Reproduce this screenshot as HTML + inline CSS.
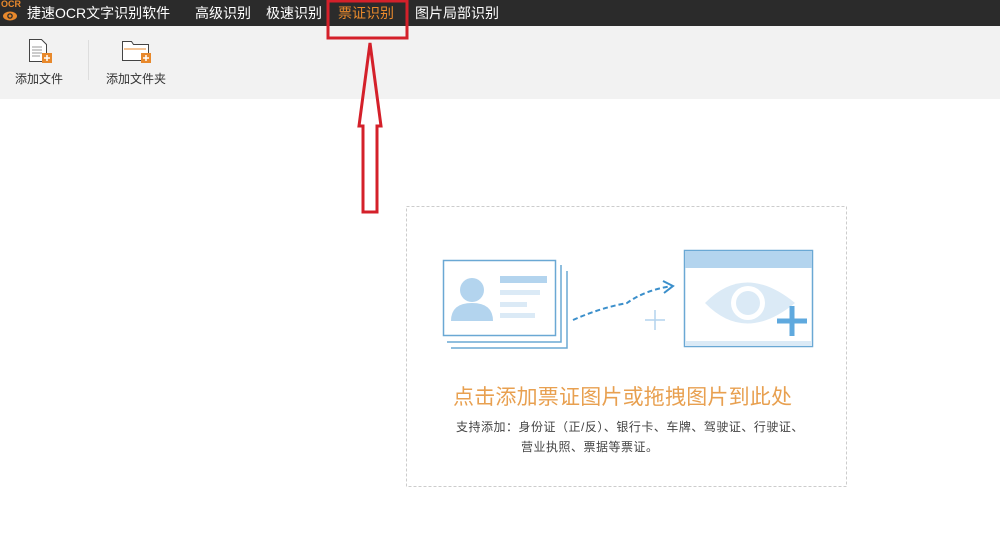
<!DOCTYPE html>
<html><head><meta charset="utf-8"><style>
body{margin:0;width:1000px;height:550px;background:#fff;position:relative;overflow:hidden;font-family:"Liberation Sans","Noto Sans CJK SC",sans-serif}
.top{position:absolute;left:0;top:0;width:1000px;height:26px;background:#2b2b2b;color:#fff;font-size:14px}
.top span{position:absolute;top:3px}
.tb{position:absolute;left:0;top:26px;width:1000px;height:73px;background:#f2f2f2}
.lbl{position:absolute;font-size:12px;color:#333}
</style></head><body>
<div class="top">
<div style="position:absolute;left:1px;top:0;font-size:9px;color:#e8892c;font-weight:bold;line-height:9px">OCR</div>
<svg style="position:absolute;left:2px;top:10px" width="16" height="12"><ellipse cx="8" cy="6" rx="7" ry="4.5" fill="#e8892c"/><circle cx="8" cy="6" r="2.8" fill="#2b2b2b"/><circle cx="8" cy="6" r="1.5" fill="#e8892c"/></svg>
<span style="left:27px">捷速OCR文字识别软件</span>
<span style="left:195px">高级识别</span>
<span style="left:266px">极速识别</span>
<span style="left:338px;color:#e8892c">票证识别</span>
<span style="left:415px">图片局部识别</span>
</div>
<div class="tb"></div>
<svg style="position:absolute;left:28px;top:38px" width="26" height="26"><path d="M1.5 1.5h12l5 5v17h-17z" fill="#fff" stroke="#444"/><path d="M4 9h10M4 12h10M4 15h10M4 18h8" stroke="#999"/><rect x="14" y="15" width="10" height="10" fill="#e8892c"/><path d="M19 17v6M16 20h6" stroke="#fff" stroke-width="1.5"/></svg>
<div class="lbl" style="left:15px;top:70px">添加文件</div>
<div style="position:absolute;left:88px;top:40px;width:1px;height:40px;background:#ddd"></div>
<svg style="position:absolute;left:121px;top:38px" width="32" height="26"><path d="M1.5 3.5h9l2 3h15v16h-26z" fill="#fff" stroke="#444"/><path d="M3 11h22" stroke="#e8892c"/><rect x="20" y="15" width="10" height="10" fill="#e8892c"/><path d="M25 17v6M22 20h6" stroke="#fff" stroke-width="1.5"/></svg>
<div class="lbl" style="left:106px;top:70px">添加文件夹</div>
<svg style="position:absolute;left:0;top:0" width="1000" height="550">
<rect x="328" y="1" width="79" height="37" fill="none" stroke="#d4202a" stroke-width="3"/>
<path d="M370 43L381 126H377V212H363V126H359Z" fill="none" stroke="#d4202a" stroke-width="3"/>
<rect x="406.5" y="206.5" width="440" height="280" fill="none" stroke="#ccc" stroke-dasharray="3,2"/>
<path d="M451 348H567V271M447 342H561V265" fill="none" stroke="#6aa8d4" stroke-width="1.5"/>
<rect x="443.5" y="260.5" width="112" height="75" fill="#fff" stroke="#6aa8d4" stroke-width="1.5"/>
<circle cx="472" cy="290" r="12" fill="#b3d4ee"/><path d="M451 321q0-18 21-18q21 0 21 18z" fill="#b3d4ee"/>
<rect x="500" y="276" width="47" height="7" fill="#b3d4ee"/><rect x="500" y="290" width="40" height="5" fill="#dbeaf6"/><rect x="500" y="302" width="27" height="5" fill="#dbeaf6"/><rect x="500" y="313" width="35" height="5" fill="#dbeaf6"/>
<path d="M573 320Q600 308 627 303Q645 290 672 286" fill="none" stroke="#3b8fcb" stroke-width="2" stroke-dasharray="5,3"/>
<path d="M663 281L673 286L664 293" fill="none" stroke="#3b8fcb" stroke-width="2"/>
<path d="M655 310v20M645 320h20" stroke="#b3d4ee" stroke-width="1.5"/>
<rect x="684.5" y="250.5" width="128" height="96" fill="#fff" stroke="#6aa8d4" stroke-width="1.5"/>
<rect x="685" y="251" width="127" height="17" fill="#b3d4ee"/><rect x="685" y="341" width="127" height="5" fill="#dbeaf6"/>
<path d="M705 303Q745 262 795 303Q745 344 705 303z" fill="#dbeaf6"/>
<circle cx="748" cy="303" r="17" fill="#fff"/><circle cx="748" cy="303" r="12" fill="#dbeaf6"/>
<path d="M792 306v30M777 321h30" stroke="#5fa9de" stroke-width="5"/>
</svg>
<div style="position:absolute;left:453px;top:381px;font-size:21px;color:#e8a050;letter-spacing:0.2px">点击添加票证图片或拖拽图片到此处</div>
<div style="position:absolute;left:456px;top:418px;font-size:12px;color:#444;letter-spacing:0.5px">支持添加：身份证（正/反）、银行卡、车牌、驾驶证、行驶证、</div>
<div style="position:absolute;left:521px;top:438px;font-size:12px;color:#444;letter-spacing:0.5px">营业执照、票据等票证。</div>
</body></html>
